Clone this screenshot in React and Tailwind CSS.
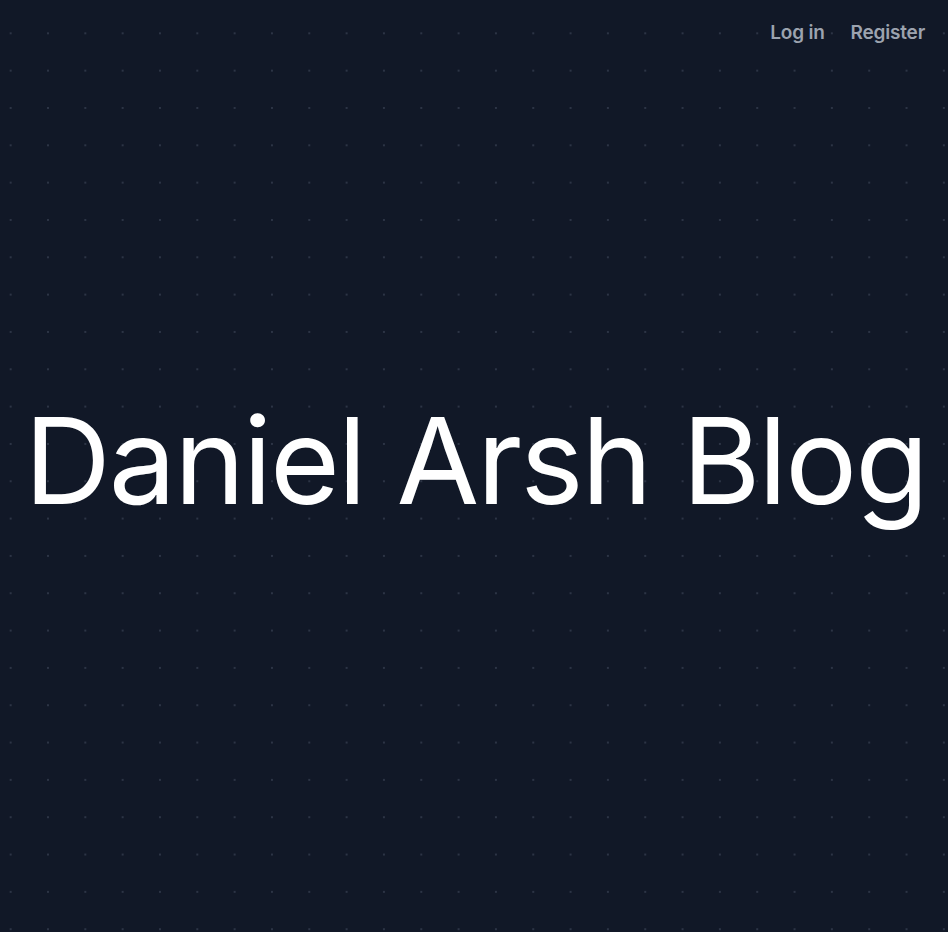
import React from 'react';

const Welcome = () => {
    return (
        <div
            className="flex h-[932px] flex-col bg-[#111827] bg-[radial-gradient(circle,#2c3445_1.3px,transparent_1.5px)] bg-[length:37.333px_37.333px] bg-[position:-8px_14.67px] font-['Inter','Liberation_Sans',sans-serif]"
        >
            <nav className="flex justify-end gap-[26px] pt-[19px] pr-[23px]">
                <a href="#" className="text-[19px] font-semibold leading-[28px] tracking-[-0.2px] text-[#9ca3af]">Log in</a>
                <a href="#" className="text-[19px] font-semibold leading-[28px] tracking-[-0.2px] text-[#9ca3af]">Register</a>
            </nav>
            <main className="flex flex-1 items-center justify-center pb-[58px] pl-[3px]">
                <h1 className="whitespace-nowrap text-[120px] font-normal leading-none tracking-[-2.1px] text-white">
                    Daniel Arsh Blog
                </h1>
            </main>
        </div>
    );
};

export default Welcome;
